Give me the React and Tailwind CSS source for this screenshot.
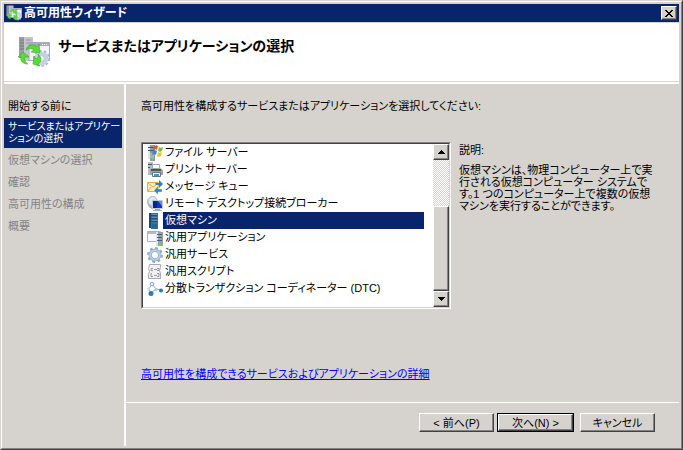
// ============================================================
// High Availability Wizard - service / application selection
// ============================================================

import React, { useState } from 'react'

const STEPS = [
  { id: 'before', lines: ['開始する前に'], state: 'done' },
  { id: 'select', lines: ['サービスまたはアプリケー', 'ションの選択'], state: 'current' },
  { id: 'vm', lines: ['仮想マシンの選択'], state: 'pending' },
  { id: 'confirm', lines: ['確認'], state: 'pending' },
  { id: 'configure', lines: ['高可用性の構成'], state: 'pending' },
  { id: 'summary', lines: ['概要'], state: 'pending' },
]

const STEP_STYLES = {
  done: 'py-1 text-black',
  current: 'bg-[#08246b] py-[3px] text-[10px] text-white',
  pending: 'py-1 text-[#848284]',
}

const SERVICES = [
  { id: 'file', label: 'ファイル サーバー', Icon: FileServerIcon },
  { id: 'print', label: 'プリント サーバー', Icon: PrintServerIcon },
  { id: 'queue', label: 'メッセージ キュー', Icon: QueueIcon },
  { id: 'broker', label: 'リモート デスクトップ接続ブローカー', Icon: BrokerIcon },
  { id: 'vm', label: '仮想マシン', Icon: VmIcon },
  { id: 'app', label: '汎用アプリケーション', Icon: AppIcon },
  { id: 'service', label: '汎用サービス', Icon: GearIcon },
  { id: 'script', label: '汎用スクリプト', Icon: ScriptIcon },
  { id: 'dtc', label: '分散トランザクション コーディネーター (DTC)', Icon: DtcIcon },
]

const RAISED = 'border border-t-white border-l-white border-r-[#424142] border-b-[#424142] bg-[#d6d3ce] shadow-[inset_-1px_-1px_0_#848284]'

// ---------- icons ----------

function ClusterIcon({ className }) {
  return (
    <svg className={className} viewBox="0 0 32 32" aria-hidden="true">
      <path d="M1 1h6v21H1z" fill="#9a9fa4" />
      <path d="M6 1h9v24H6z" fill="#c3c6ca" />
      <path d="M2 4h4M2 7h4M2 10h4M2 13h4" stroke="#74797f" />
      <path d="M8 4h5M8 7h5" stroke="#92979d" />
      <rect x="11" y="6.500" width="20.500" height="18" fill="#f3f3f8" stroke="#a9a9ba" />
      <path d="M11 7h20v3H11z" fill="#a9a9c0" />
      <path d="M24 8.500h1M26 8.500h1M28 8.500h1" stroke="#fff" />
      <circle cx="23.500" cy="22.500" r="7.200" fill="none" stroke="#a5b6cb" strokeWidth="2.500" strokeDasharray="2.260 2.260" />
      <circle cx="23.500" cy="22.500" r="5" fill="none" stroke="#c6d2e1" strokeWidth="4" />
      <circle cx="23.500" cy="22.500" r="2.800" fill="#fff" stroke="#9fb2c9" strokeWidth=".8" />
      <path d="M8 14c1-5 7-7 11-3l2-3 1 9-9-1 3-2c-3-2-5-2-8 0z" fill="#56dc35" stroke="#37aa22" strokeWidth=".6" />
      <path d="M10 28c-5 0-8-3-7-7H0l5-5 6 5H7c-1 3 0 5 3 7z" fill="#56dc35" stroke="#37aa22" strokeWidth=".6" />
      <path d="M23 22c0 3-1 5-3 6l2 2-7-2 1-8 2 3c2-1 3-3 2-5z" fill="#56dc35" stroke="#37aa22" strokeWidth=".6" />
    </svg>
  )
}

function FileServerIcon() {
  return (
    <svg className="size-4" viewBox="0 0 16 16" aria-hidden="true">
      <path d="M1 0h2v14H1z" fill="#dfe4e8" />
      <path d="M3 0h5v16H3z" fill="#8d9ca8" />
      <path d="M1 2.500h6M1 5.500h6" stroke="#3f566a" />
      <path d="M3 8h4v5H3z" fill="#a9b5be" />
      <path d="M5 13h2v2H5z" fill="#5be02d" />
      <path d="M7 1c2-1 3-1 4 0l-1 4c-1-1-2-1-4 0z" fill="#e8562c" />
      <path d="M12 2c1 1 2 1 4 0l-1 4c-1 1-3 1-4 0z" fill="#7bbf3a" />
      <path d="M6 6c1-1 3-1 4 0l-1 4c-1-1-2-1-4 0z" fill="#3d86d8" />
      <path d="M11 7c1 1 2 1 4 0l-1 4c-1 1-3 1-4 0z" fill="#f5c22b" />
    </svg>
  )
}

function PrintServerIcon() {
  return (
    <svg className="size-4" viewBox="0 0 16 16" aria-hidden="true">
      <path d="M1 0h5v13H1z" fill="#b4bec6" />
      <path d="M1 2.500h4M1 5.500h2" stroke="#3f566a" />
      <path d="M5.500 2.500h7v5h-7z" fill="#fff" stroke="#a1a6ab" />
      <path d="M3 7l2-1h8l3 2v5H3z" fill="#a1a6ab" />
      <path d="M4 7h10v2H4z" fill="#4e555b" />
      <path d="M5.500 10.500h8v4h-8z" fill="#e9f3fb" stroke="#6a7279" />
      <path d="M7 12h5v2H7z" fill="#2f9ee0" />
    </svg>
  )
}

function QueueIcon() {
  return (
    <svg className="size-4" viewBox="0 0 16 16" aria-hidden="true">
      <path d="M.5 3.500h11v9H.5z" fill="#fdeeb8" stroke="#e2b04a" />
      <path d="M1 4l5 4 5-4M1 12l3-4" fill="none" stroke="#dba53c" strokeWidth=".9" />
      <path d="M8 4h4V1l4 4-4 4V6H9z" fill="#2f83c5" />
      <path d="M15 10h-4V7l-4 4.500 4 4.500v-3h4z" fill="#2f83c5" stroke="#fff" strokeWidth=".4" />
    </svg>
  )
}

function BrokerIcon() {
  return (
    <svg className="size-4" viewBox="0 0 16 16" aria-hidden="true">
      <path d="M1 3c0 5 3 8 8 9l-4 1C1 11-1 7 1 3z" fill="#9db0bf" />
      <circle cx="5.500" cy="5" r="4.500" fill="#dfe8ef" stroke="#a9bac8" />
      <path d="M5.500 4.500h10v8h-10z" fill="#1237b8" stroke="#c3cad1" />
      <path d="M6 5h4v7H6z" fill="#07209b" />
      <path d="M11 5h4v5z" fill="#5c93ea" />
      <path d="M8 13h5v1h2v1H6v-1h2z" fill="#a4acb3" />
    </svg>
  )
}

function VmIcon() {
  return (
    <svg className="size-4" viewBox="0 0 16 16" aria-hidden="true">
      <path d="M2 0h2v15H2z" fill="#1c4a72" />
      <path d="M4 0h7v16H4z" fill="#34709f" />
      <path d="M3 2.500h7M3 5.500h7M3 8.500h7" stroke="#1f4f79" />
      <path d="M5 1.500h5M5 4.500h5M5 7.500h5" stroke="#5c93bd" />
      <path d="M5 11h5v4H5z" fill="#2a6290" />
    </svg>
  )
}

function AppIcon() {
  return (
    <svg className="size-4" viewBox="0 0 16 16" aria-hidden="true">
      <path d="M.5 1.500h13v10H.5z" fill="#f7f9fb" stroke="#a9b2bb" />
      <path d="M1 2h12v2H1z" fill="#b5b9cc" />
      <path d="M9 2h7v14H9z" fill="#94a2ae" />
      <path d="M9 2h2v14H9z" fill="#dfe5ea" />
      <path d="M10 4.500h5M10 7.500h5M10 10.500h5" stroke="#4a6074" />
      <path d="M12 13h2v2h-2z" fill="#5be02d" />
    </svg>
  )
}

function GearIcon() {
  return (
    <svg className="size-4" viewBox="0 0 16 16" aria-hidden="true">
      <circle cx="8" cy="8" r="6.700" fill="none" stroke="#8faac3" strokeWidth="2.500" strokeDasharray="2.630 2.630" />
      <circle cx="8" cy="8" r="4.800" fill="none" stroke="#8faac3" strokeWidth="3.400" />
      <circle cx="8" cy="8" r="4.800" fill="none" stroke="#b9cedf" strokeWidth="2" />
    </svg>
  )
}

function ScriptIcon() {
  return (
    <svg className="size-4" viewBox="0 0 16 16" aria-hidden="true">
      <path d="M2.500.500h11v3l-1 3 1 3v5h-12v-4l1-3-1-3z" fill="#f1f1f4" stroke="#a9abb1" />
      <path d="M6 4.500H4v2h2M7 5.500h3M10 4.500h2v2h-2M5 9.500H4v3h2M7 11.500h3M10 9.500h2v3h-2" fill="none" stroke="#85888f" strokeWidth=".8" />
    </svg>
  )
}

function DtcIcon() {
  return (
    <svg className="size-4" viewBox="0 0 16 16" aria-hidden="true">
      <path d="M5 3L2 8l2 4M5 3l4 5 5 1M4 12l5-4" fill="none" stroke="#9aa9b4" />
      <circle cx="5" cy="3" r="1.800" fill="#e8f1f7" stroke="#86a9c1" />
      <circle cx="1.500" cy="8" r="1.500" fill="#c4dae8" />
      <circle cx="4" cy="12.500" r="2.500" fill="#2d7cab" />
      <circle cx="9" cy="8.500" r="1.500" fill="#a5c8de" />
      <circle cx="14" cy="9.500" r="2" fill="#2d7cab" />
    </svg>
  )
}

// ---------- pieces ----------

function TitleBar() {
  return (
    <div className="flex h-[18px] items-center gap-0.5 bg-[#08246b] px-0.5 text-white">
      <ClusterIcon className="size-4" />
      <span className="flex-1 text-xs leading-4 font-bold">高可用性ウィザード</span>
      <button type="button" aria-label="閉じる" className={`flex h-3.5 w-4 items-center justify-center ${RAISED}`}>
        <svg className="h-[7px] w-2" viewBox="0 0 8 7" shapeRendering="crispEdges" aria-hidden="true">
          <path d="M0 0h2v1h1v1h2V1h1V0h2v1H7v1H6v1H5v1h1v1h1v1h1v1H6V6H5V5H3v1H2v1H0V6h1V5h1V4h1V3H2V2H1V1H0z" fill="#000" />
        </svg>
      </button>
    </div>
  )
}

function StepList() {
  return (
    <ol className="flex w-[120px] shrink-0 flex-col gap-0.5 pt-3 pr-0.5">
      {STEPS.map(step => (
        <li
          key={step.id}
          aria-current={step.state === 'current' ? 'step' : undefined}
          className={`px-1 leading-3 whitespace-nowrap ${STEP_STYLES[step.state]}`}
        >
          {step.lines.map(line => <span key={line} className="block">{line}</span>)}
        </li>
      ))}
    </ol>
  )
}

function ScrollBar() {
  return (
    <div className="flex w-4 shrink-0 flex-col bg-[repeating-conic-gradient(#fff_0_25%,#d6d3ce_0_50%)] bg-size-[2px_2px]">
      <button type="button" aria-label="上へ" className={`flex h-4 items-center justify-center ${RAISED}`}>
        <svg className="h-1 w-[7px]" viewBox="0 0 7 4" shapeRendering="crispEdges" aria-hidden="true">
          <path d="M3 0h1v1h1v1h1v1h1v1H0V3h1V2h1V1h1z" />
        </svg>
      </button>
      <div className="flex-[47]" />
      <div className={`flex-[84] ${RAISED}`} />
      <button type="button" aria-label="下へ" className={`flex h-4 items-center justify-center ${RAISED}`}>
        <svg className="h-1 w-[7px]" viewBox="0 0 7 4" shapeRendering="crispEdges" aria-hidden="true">
          <path d="M0 0h7v1H6v1H5v1H4v1H3V3H2V2H1V1H0z" />
        </svg>
      </button>
    </div>
  )
}

function ServiceList({ selected, onSelect }) {
  return (
    <div className="flex min-w-0 flex-1 border border-t-[#848284] border-r-white border-b-white border-l-[#848284]">
      <div className="flex min-w-0 flex-1 border border-t-[#424142] border-r-[#d6d3ce] border-b-[#d6d3ce] border-l-[#424142] bg-white">
        <ul role="listbox" aria-labelledby="service-prompt" className="min-w-0 flex-1 pr-[9px] pb-2.5 pl-1">
          {SERVICES.map(({ id, label, Icon }) => (
            <li key={id} role="option" aria-selected={id === selected}>
              <button type="button" onClick={() => onSelect(id)} className="flex h-[17px] w-full items-center text-left">
                <Icon />
                <span className={`flex-1 pl-0.5 leading-[17px] whitespace-nowrap ${id === selected ? 'bg-[#08246b] text-white' : ''}`}>
                  {label}
                </span>
              </button>
            </li>
          ))}
        </ul>
        <ScrollBar />
      </div>
    </div>
  )
}

export default function App() {
  const [selected, setSelected] = useState('vm')

  return (
    <div className="min-h-screen border border-t-[#d6d3ce] border-r-[#424142] border-b-[#424142] border-l-[#d6d3ce] bg-[#d6d3ce] font-[family-name:'Liberation_Sans','Noto_Sans_CJK_JP',sans-serif] text-[11px] text-black [font-feature-settings:'palt']">
      <div className="flex min-h-[calc(100vh-2px)] flex-col border border-t-white border-r-[#848284] border-b-[#848284] border-l-white p-0.5">
        <TitleBar />
        <header className="mt-px flex h-[58px] items-center gap-2 bg-white pl-3.5">
          <ClusterIcon className="size-8" />
          <h1 className="pb-3 text-sm leading-5 font-bold">サービスまたはアプリケーションの選択</h1>
        </header>
        <div className="mt-px h-0.5 bg-white" />

        <div className="flex flex-1">
          <StepList />
          <div className="w-0.5 shrink-0 bg-white" />
          <main className="flex min-w-0 flex-1 flex-col">
            <div className="flex-1 pt-3.5 pl-[15px]">
              <p id="service-prompt" className="leading-4">
                高可用性を構成するサービスまたはアプリケーションを選択してください:
              </p>
              <div className="mt-7 flex gap-2">
                <ServiceList selected={selected} onSelect={setSelected} />
                <section className="w-[220px] shrink-0">
                  <h2 className="leading-4">説明:</h2>
                  <p className="mt-1.5 leading-3">
                    仮想マシンは、物理コンピューター上で実<br />
                    行される仮想コンピューター システムで<br />
                    す。1 つのコンピューター上で複数の仮想<br />
                    マシンを実行することができます。
                  </p>
                </section>
              </div>
              <a href="#details" className="mt-[57px] inline-block leading-4 text-[#0000ff] underline">
                高可用性を構成できるサービスおよびアプリケーションの詳細
              </a>
            </div>
            <footer className="flex h-11 items-start justify-end border-t border-white pt-2.5 pr-6">
              <button type="button" className={`h-[19px] w-[75px] leading-4 ${RAISED}`}>&lt; 前へ(P)</button>
              <div className="ml-[3px] border border-black">
                <button type="button" className={`block h-[17px] w-[75px] leading-[14px] ${RAISED}`}>次へ(N) &gt;</button>
              </div>
              <button type="button" className={`ml-1.5 h-[19px] w-[75px] leading-4 ${RAISED}`}>キャンセル</button>
            </footer>
          </main>
        </div>
      </div>
    </div>
  )
}
